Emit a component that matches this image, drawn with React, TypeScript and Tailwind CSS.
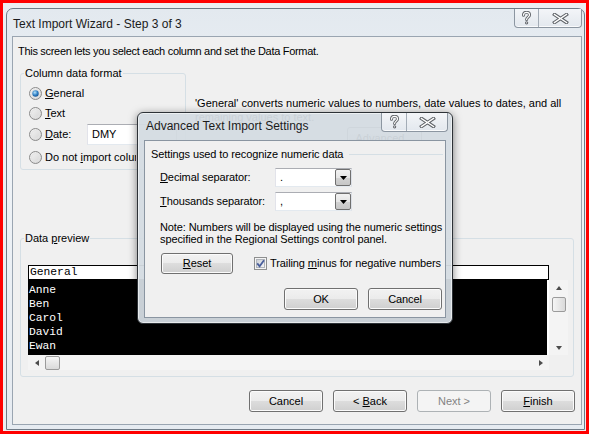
import React from 'react';

const btn =
  'flex items-center justify-center rounded-[3px] border border-[#707070] bg-[linear-gradient(to_bottom,#f2f2f2_0%,#ebebeb_50%,#dddddd_50%,#cfcfcf_100%)] shadow-[inset_0_0_0_1px_#fbfbfb] text-[11px] leading-[13px] text-black';

const mono = "font-['Liberation_Mono','Courier_New',monospace] text-[11.3px] leading-[14px]";

function Radio({ id, checked }: { id: string; checked?: boolean }) {
  return (
    <svg width="13" height="13" viewBox="0 0 13 13" className="shrink-0">
      <defs>
        <linearGradient id={`rf${id}`} x1="0" y1="0" x2="1" y2="1">
          <stop offset="0" stopColor="#f6f6f6" />
          <stop offset="1" stopColor="#d2d2d2" />
        </linearGradient>
        <radialGradient id={`rd${id}`} cx="0.4" cy="0.35" r="0.75">
          <stop offset="0" stopColor="#b5e3fb" />
          <stop offset="0.55" stopColor="#2f7fc4" />
          <stop offset="1" stopColor="#174d86" />
        </radialGradient>
      </defs>
      <circle cx="6.5" cy="6.5" r="6" fill={`url(#rf${id})`} stroke="#8b8b8b" />
      <circle cx="6.5" cy="6.5" r="4" fill="none" stroke="#e4e4e4" />
      {checked && <circle cx="6.5" cy="6.5" r="3.2" fill={`url(#rd${id})`} />}
    </svg>
  );
}

function CheckBox() {
  return (
    <svg width="13" height="13" viewBox="0 0 13 13" className="shrink-0">
      <defs>
        <linearGradient id="cbf" x1="0" y1="0" x2="1" y2="1">
          <stop offset="0" stopColor="#cbcfd5" />
          <stop offset="1" stopColor="#f7f7f7" />
        </linearGradient>
      </defs>
      <rect x="0.5" y="0.5" width="12" height="12" fill="#f4f4f4" stroke="#8e8f8f" />
      <rect x="2.5" y="2.5" width="8" height="8" fill="url(#cbf)" stroke="#b0b4ba" />
      <path d="M3.2 6.4 L5.6 9.2 L10 3.2" fill="none" stroke="#4a5f9c" strokeWidth="1.8" />
    </svg>
  );
}

function HelpGlyph() {
  const d = 'M2.5 4.2 C2.5 2.2 4 1.3 5.5 1.3 C7.2 1.3 8.5 2.3 8.5 4 C8.5 6 5.6 6.3 5.6 8.6';
  return (
    <svg width="11" height="14" viewBox="0 0 11 14">
      <path d={d} fill="none" stroke="#5f6368" strokeWidth="3" strokeLinecap="round" />
      <circle cx="5.6" cy="11.8" r="1.6" fill="#5f6368" />
      <path d={d} fill="none" stroke="#ffffff" strokeWidth="1.2" strokeLinecap="round" />
      <circle cx="5.6" cy="11.8" r="0.6" fill="#ffffff" />
    </svg>
  );
}

function CloseGlyph() {
  return (
    <svg width="17" height="11" viewBox="0 0 17 11">
      <path d="M2.5 1.5 L14.5 9.5 M14.5 1.5 L2.5 9.5" fill="none" stroke="#5f6368" strokeWidth="3.4" strokeLinecap="square" />
      <path d="M2.5 1.5 L14.5 9.5 M14.5 1.5 L2.5 9.5" fill="none" stroke="#ffffff" strokeWidth="1.4" strokeLinecap="square" />
    </svg>
  );
}

function CaptionButtons({ help, close }: { help: string; close: string }) {
  return (
    <div className="flex h-[19px] shrink-0 rounded-b-[4px] border-x border-b border-[#8c96a1] bg-[linear-gradient(to_bottom,#f3f5f8,#e3e8ee)] shadow-[inset_0_-1px_0_#fafbfc]">
      <div className={`flex items-center justify-center border-r border-[#a3acb6] ${help}`}>
        <HelpGlyph />
      </div>
      <div className={`flex items-center justify-center ${close}`}>
        <CloseGlyph />
      </div>
    </div>
  );
}

function DropArrow() {
  return (
    <div className="flex h-[17px] w-[16px] items-center justify-center rounded-[2px] border border-[#6f6f6f] bg-[linear-gradient(to_bottom,#f2f2f2_0%,#e6e6e6_50%,#d3d3d3_50%,#c6c6c6_100%)]">
      <svg width="7" height="4" viewBox="0 0 7 4">
        <path d="M0 0 H7 L3.5 4 Z" fill="#000" />
      </svg>
    </div>
  );
}

function Combo({ value }: { value: string }) {
  return (
    <div className="flex h-[19px] w-[77px] items-center justify-between border border-[#abadb3] border-b-[#e3e9ef] border-l-[#e2e3ea] border-r-[#dbdfe6] bg-white pl-[4px]">
      <span className="leading-[13px]">{value}</span>
      <DropArrow />
    </div>
  );
}

function Arrow({ dir }: { dir: 'up' | 'down' | 'left' | 'right' }) {
  const d = {
    up: 'M0 4 L3 0 L6 4 Z',
    down: 'M0 0 H6 L3 4 Z',
    left: 'M4 0 V6 L0 3 Z',
    right: 'M0 0 V6 L4 3 Z',
  }[dir];
  const vertical = dir === 'up' || dir === 'down';
  return (
    <svg width={vertical ? 6 : 4} height={vertical ? 4 : 6} viewBox={vertical ? '0 0 6 4' : '0 0 4 6'}>
      <path d={d} fill="#4d4d4d" />
    </svg>
  );
}

const names = ['Anne', 'Ben', 'Carol', 'David', 'Ewan'];

function DataPreview() {
  return (
    <div className="ml-[4px] grid h-[105px] w-[540px] grid-cols-[521px_19px] grid-rows-[15px_75px_15px]">
      <div className={`border border-black bg-white pl-[1px] ${mono}`}>
        <span className="relative -top-[1px]">General</span>
      </div>
      <div />
      <div className={`border-r-2 border-white bg-black pl-[1px] pt-[3px] text-white ${mono}`}>
        {names.map((n) => (
          <div key={n}>{n}</div>
        ))}
      </div>
      <div className="flex flex-col items-center bg-[#f4f4f4]">
        <div className="flex h-[15px] items-center">
          <Arrow dir="up" />
        </div>
        <div className="mt-[2px] h-[15px] w-[14px] rounded-[2px] border border-[#9b9b9b] bg-[linear-gradient(to_right,#f5f5f5,#dadada)]" />
        <div className="flex-1" />
        <div className="flex h-[15px] items-center">
          <Arrow dir="down" />
        </div>
      </div>
      <div className="flex items-center bg-[#f4f4f4]">
        <div className="flex w-[17px] justify-center">
          <Arrow dir="left" />
        </div>
        <div className="h-[14px] w-[15px] rounded-[2px] border border-[#9b9b9b] bg-[linear-gradient(to_bottom,#f5f5f5,#dadada)]" />
        <div className="flex-1" />
        <div className="flex w-[17px] justify-center">
          <Arrow dir="right" />
        </div>
      </div>
      <div />
    </div>
  );
}

function AdvancedDialog() {
  return (
    <div className="absolute left-[134px] top-[109px] flex h-[212px] w-[316px] flex-col rounded-[6px] border border-[#2d3237] bg-[#d4dbe2]/95 pb-[5px] pl-[6px] pr-[6px] shadow-[inset_0_0_0_1px_rgba(255,255,255,0.55),0_2px_8px_rgba(0,0,0,0.5)]">
      <div className="flex h-[27px] shrink-0 items-start justify-between">
        <div className="pl-[2px] pt-[6px] text-[12px] leading-[14px] text-[#1b1b1b]">Advanced Text Import Settings</div>
        <div className="-mr-[2px]">
          <CaptionButtons help="w-[25px]" close="w-[40px]" />
        </div>
      </div>
      <div className="flex-1 border border-[#8a95a1] bg-[#f0f0f0] tracking-[-0.1px]">
        <div className="flex items-center pl-[6px] pr-[2px] pt-[6px] leading-[14px]">
          <span>Settings used to recognize numeric data</span>
          <div className="ml-[6px] h-px flex-1 bg-[#d5dfe5]" />
        </div>
        <div className="mt-[7px] flex h-[19px] items-center">
          <div className="w-[130px] pl-[15px]">
            <u>D</u>ecimal separator:
          </div>
          <Combo value="." />
        </div>
        <div className="mt-[5px] flex h-[19px] items-center">
          <div className="w-[130px] pl-[15px]">
            <u>T</u>housands separator:
          </div>
          <Combo value="," />
        </div>
        <p className="mt-[10px] whitespace-nowrap pl-[15px] leading-[12px]">
          Note: Numbers will be displayed using the numeric settings
          <br />
          specified in the Regional Settings control panel.
        </p>
        <div className="mt-[8px] flex h-[21px] items-center">
          <div className={`ml-[16px] h-[21px] w-[72px] ${btn}`}>
            <span>
              <u>R</u>eset
            </span>
          </div>
          <div className="ml-[21px]">
            <CheckBox />
          </div>
          <span className="ml-[3px] whitespace-nowrap">
            Trailing <u>m</u>inus for negative numbers
          </span>
        </div>
        <div className="mt-[14px] flex justify-end gap-[10px] pr-[3px]">
          <div className={`h-[22px] w-[74px] ${btn} border-[#3c7fb1] shadow-[inset_0_0_0_1px_#a9dcf6]`}>OK</div>
          <div className={`h-[22px] w-[74px] ${btn}`}>Cancel</div>
        </div>
      </div>
    </div>
  );
}

export default function App() {
  return (
    <div className="relative h-[434px] w-[589px] overflow-hidden border-[3px] border-[#ff0000] bg-[#eceef1] pl-[3px] pt-[5px] font-['Liberation_Sans',Arial,sans-serif] text-[11px] text-black">
      <div className="flex h-[422px] w-[579px] flex-col rounded-t-[7px] border border-[#6f7a86] bg-[linear-gradient(to_bottom,#e3e9ef,#eff3f7_35%,#e6ebf1)] pb-[4px] pl-[5px] pr-[2px]">
        <div className="flex h-[27px] shrink-0 items-start justify-between">
          <div className="pl-[1px] pt-[8px] text-[12px] leading-[14px] text-[#1b1b1b]">Text Import Wizard - Step 3 of 3</div>
          <CaptionButtons help="w-[24px]" close="w-[42px]" />
        </div>

        <div className="flex flex-1 flex-col border border-[#9aa5b1] bg-[#f0f0f0]">
          <p className="pl-[5px] pt-[7px] leading-[14px] tracking-[-0.3px]">
            This screen lets you select each column and set the Data Format.
          </p>

          <div className="mt-[8px] flex">
            <fieldset className="ml-[7px] h-[104px] w-[166px] shrink-0 rounded-[3px] border border-[#d5dfe5] px-[3px]">
              <legend className="px-[1px] leading-[14px]">Column data format</legend>
              <div className="pl-[5px] pt-[3px]">
                <div className="flex h-[20px] items-center gap-[3px]">
                  <Radio id="g" checked />
                  <span>
                    <u>G</u>eneral
                  </span>
                </div>
                <div className="flex h-[20px] items-center gap-[3px]">
                  <Radio id="t" />
                  <span>
                    <u>T</u>ext
                  </span>
                </div>
                <div className="flex h-[22px] items-center gap-[3px]">
                  <Radio id="d" />
                  <span className="w-[39px]">
                    <u>D</u>ate:
                  </span>
                  <div className="flex h-[21px] w-[90px] items-center border border-[#abadb3] border-b-[#e3e9ef] border-l-[#e2e3ea] bg-white pl-[4px]">
                    DMY
                  </div>
                </div>
                <div className="mt-[2px] flex h-[20px] items-center gap-[3px]">
                  <Radio id="s" />
                  <span className="w-[91px] overflow-hidden whitespace-nowrap">
                    Do not <u>i</u>mport column (skip)
                  </span>
                </div>
              </div>
            </fieldset>

            <div className="ml-[9px] w-[372px] pt-[30px]">
              <p className="whitespace-nowrap leading-[14px]">
                'General' converts numeric values to numbers, date values to dates, and all
                <br />
                remaining values to text.
              </p>
              <div className={`ml-[152px] mt-[3px] h-[22px] w-[75px] ${btn}`}>
                <span>
                  <u>A</u>dvanced...
                </span>
              </div>
            </div>
          </div>

          <fieldset className="ml-[7px] mt-[61px] w-[554px] rounded-[3px] border border-[#d5dfe5] px-[3px] pb-[6px] pt-[20px]">
            <legend className="px-[1px] leading-[14px]">
              Data <u>p</u>review
            </legend>
            <DataPreview />
          </fieldset>

          <div className="mt-[13px] flex justify-end gap-[10px] pr-[6px]">
            <div className={`h-[22px] w-[74px] ${btn}`}>Cancel</div>
            <div className={`h-[22px] w-[74px] ${btn}`}>
              <span>
                &lt; <u>B</u>ack
              </span>
            </div>
            <div className="flex h-[22px] w-[74px] items-center justify-center rounded-[3px] border border-[#adb2b5] bg-[#f4f4f4] text-[11px] text-[#838383]">
              Next &gt;
            </div>
            <div className={`h-[22px] w-[74px] ${btn}`}>
              <span>
                <u>F</u>inish
              </span>
            </div>
          </div>
        </div>
      </div>
      <AdvancedDialog />
    </div>
  );
}
